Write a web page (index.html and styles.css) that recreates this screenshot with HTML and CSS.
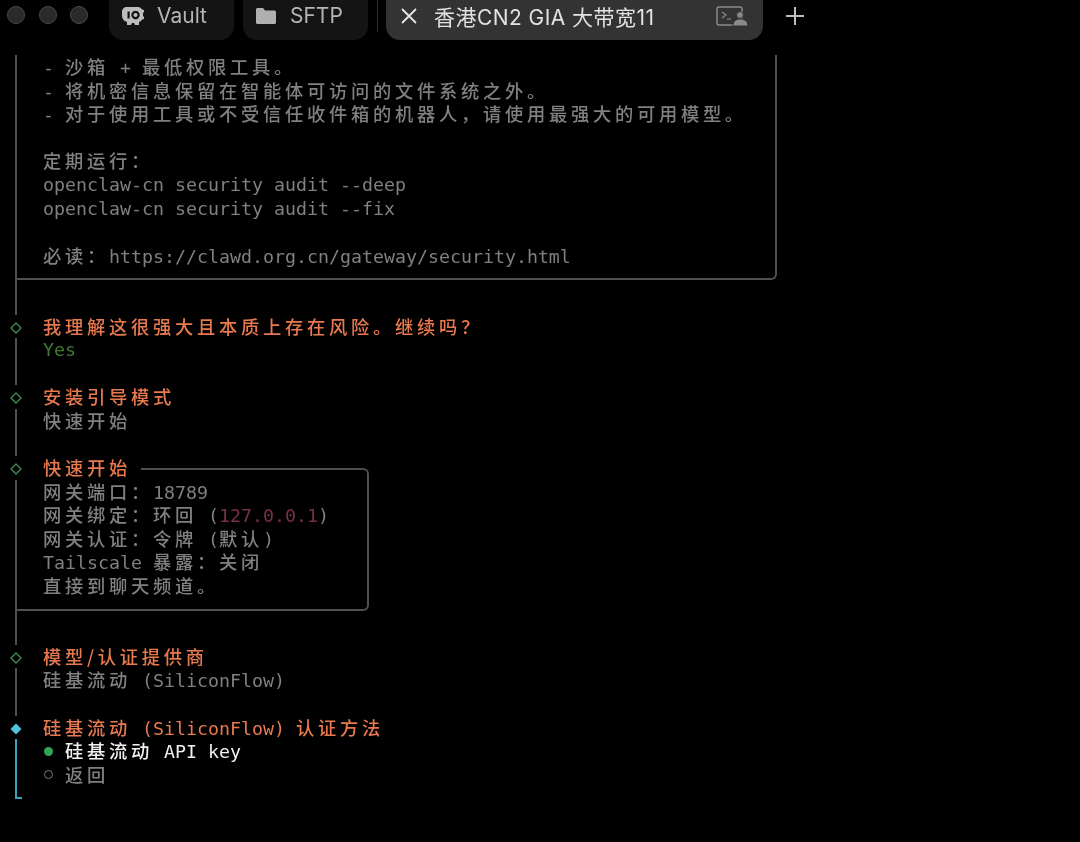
FILE: index.html
```html
<!DOCTYPE html>
<html lang="zh">
<head>
<meta charset="utf-8">
<title>Terminal</title>
<link rel="stylesheet" href="styles.css">
</head>
<body>
<div class="tabbar">
  <div class="lights"><i class="light"></i><i class="light"></i><i class="light"></i></div>
  <div class="tab tab-vault">
    <svg class="ic-vault" viewBox="0 0 24 20"><path fill="#bdbdbd" fill-rule="evenodd" d="M6 1h11c2 0 3 1 4 2.500l2 .5v2l-1 1v3l1 1v2l-2 .5c-.5 1-1.500 2-3 2.500v3h-4l-1-2h-2l-1 2H6v-3C3 15 1 13 1 9V6c0-3 2-5 5-5zM6.500 5.500v7h2.200v-7zM14.500 4.800a4.200 4.200 0 1 0 .01 0zm0 2.200a2 2 0 1 1-.01 0z"/></svg>
    <span class="tab-label">Vault</span>
  </div>
  <div class="tab tab-sftp">
    <svg class="ic-folder" viewBox="0 0 20 16"><path fill="#b0b0b0" d="M0 1.500C0 .7.7 0 1.500 0H7l2 2.500h9.500c.8 0 1.500.7 1.500 1.500v10.500c0 .8-.7 1.500-1.500 1.500h-17C.7 16 0 15.300 0 14.500z"/></svg>
    <span class="tab-label">SFTP</span>
  </div>
  <div class="divider"></div>
  <div class="tab tab-active">
    <svg class="ic-close" viewBox="0 0 16 16"><path d="M1 1l14 14M15 1L1 15" stroke="#e6e6e6" stroke-width="1.800" fill="none"/></svg>
    <span class="tab-title">香港CN2 GIA 大带宽11</span>
    <svg class="ic-term" viewBox="0 0 32 20"><rect x="1" y="1" width="25" height="18" rx="2" fill="none" stroke="#8a8a8a" stroke-width="1.500"/><path d="M6 6l4 3-4 3M11 13h4" stroke="#8a8a8a" stroke-width="1.200" fill="none"/><circle cx="24" cy="9" r="3.400" fill="#8a8a8a" stroke="#333" stroke-width="1"/><path d="M17 20c0-5 3-7 7-7s8 2 8 7z" fill="#8a8a8a" stroke="#333" stroke-width="1"/></svg>
  </div>
  <svg class="ic-plus" viewBox="0 0 18 18"><path d="M9 0v18M0 9h18" stroke="#bdbdbd" stroke-width="2"/></svg>
</div>

<main class="term">
  <div class="box box-wide">
    <div class="row"><i class="rail"></i><span>- <b class="c">沙箱</b> + <b class="c">最低权限工具。</b></span></div>
    <div class="row"><i class="rail"></i><span>- <b class="c">将机密信息保留在智能体可访问的文件系统之外。</b></span></div>
    <div class="row"><i class="rail"></i><span>- <b class="c">对于使用工具或不受信任收件箱的机器人，请使用最强大的可用模型。</b></span></div>
    <div class="row"><i class="rail"></i></div>
    <div class="row"><i class="rail"></i><span><b class="c">定期运行：</b></span></div>
    <div class="row"><i class="rail"></i><span>openclaw-cn security audit --deep</span></div>
    <div class="row"><i class="rail"></i><span>openclaw-cn security audit --fix</span></div>
    <div class="row"><i class="rail"></i></div>
    <div class="row"><i class="rail"></i><span><b class="c">必读：</b>https://clawd.org.cn/gateway/security.html</span></div>
  </div>
  <div class="row"><i class="rail"></i><i class="box-foot box-foot-wide"></i></div>
  <div class="row"><i class="rail"></i></div>

  <div class="row"><svg class="diamond" viewBox="0 0 12 12"><path d="M6 1 11 6 6 11 1 6z" fill="none" stroke="#3f8a4c" stroke-width="1.400"/></svg><span class="title"><b class="c">我理解这很强大且本质上存在风险。继续吗？</b></span></div>
  <div class="row"><i class="rail"></i><span class="yes">Yes</span></div>
  <div class="row"><i class="rail"></i></div>

  <div class="row"><svg class="diamond" viewBox="0 0 12 12"><path d="M6 1 11 6 6 11 1 6z" fill="none" stroke="#3f8a4c" stroke-width="1.400"/></svg><span class="title"><b class="c">安装引导模式</b></span></div>
  <div class="row"><i class="rail"></i><span><b class="c">快速开始</b></span></div>
  <div class="row"><i class="rail"></i></div>

  <div class="qbox">
    <div class="row"><svg class="diamond" viewBox="0 0 12 12"><path d="M6 1 11 6 6 11 1 6z" fill="none" stroke="#3f8a4c" stroke-width="1.400"/></svg><span class="title"><b class="c">快速开始</b></span><i class="box-head"></i></div>
    <div class="row row-edge"><i class="rail"></i><span><b class="c">网关端口：</b>18789</span></div>
    <div class="row row-edge"><i class="rail"></i><span><b class="c">网关绑定：环回</b> (<span class="ip">127.0.0.1</span>)</span></div>
    <div class="row row-edge"><i class="rail"></i><span><b class="c">网关认证：令牌</b> (<b class="c">默认</b>)</span></div>
    <div class="row row-edge"><i class="rail"></i><span>Tailscale <b class="c">暴露：关闭</b></span></div>
    <div class="row row-edge"><i class="rail"></i><span><b class="c">直接到聊天频道。</b></span></div>
    <div class="row"><i class="rail"></i><i class="box-foot"></i></div>
  </div>
  <div class="row"><i class="rail"></i></div>

  <div class="row"><svg class="diamond" viewBox="0 0 12 12"><path d="M6 1 11 6 6 11 1 6z" fill="none" stroke="#3f8a4c" stroke-width="1.400"/></svg><span class="title"><b class="c">模型/认证提供商</b></span></div>
  <div class="row"><i class="rail"></i><span><b class="c">硅基流动</b> (SiliconFlow)</span></div>
  <div class="row"><i class="rail"></i></div>

  <div class="row"><svg class="diamond" viewBox="0 0 12 12"><path d="M6 .5 11.500 6 6 11.500 .5 6z" fill="#4fc3e0"/></svg><span class="title"><b class="c">硅基流动</b> (SiliconFlow) <b class="c">认证方法</b></span></div>
  <div class="row"><i class="rail rail-active"></i><span class="radio"><i class="dot"></i></span><span class="selected"><b class="c">硅基流动</b> API key</span></div>
  <div class="row"><i class="rail rail-active"></i><span class="radio"><i class="ring"></i></span><span><b class="c">返回</b></span></div>
  <div class="row"><i class="rail-end"></i></div>
</main>
</body>
</html>
```
FILE: styles.css
```css
* { box-sizing: border-box; }
html, body { margin: 0; height: 100%; background: #000; overflow: hidden; }
body { width: 1080px; height: 842px; filter: blur(0.4px); }

.tabbar { display: flex; align-items: flex-start; height: 55px; font-family: Inter, "Noto Sans CJK SC", sans-serif; }
.lights { display: flex; gap: 13.500px; margin: 6px 21px 0 7px; }
.light { width: 18px; height: 18px; border-radius: 50%; background: #2a2a2a; border: 1px solid #484848; }
.tab { height: 40px; border-radius: 0 0 14px 14px; display: flex; align-items: center; padding-bottom: 9px; background: #141414; color: #b5b5b5; font-size: 21px; }
.tab-vault { width: 125px; padding-left: 12px; }
.tab-sftp { width: 125px; padding-left: 13px; margin-left: 9px; }
.tab-label { margin-left: 12px; }
.ic-vault { width: 24px; height: 20px; }
.ic-folder { width: 20px; height: 16px; margin-right: 2px; }
.divider { width: 1px; height: 32px; background: #2e2e2e; margin: 0 8px 0 9px; }
.tab-active { width: 377px; background: #333; color: #e2e2e2; padding-left: 15px; padding-right: 15px; }
.ic-close { width: 16px; height: 16px; }
.tab-title { margin-left: 17px; flex: 1; font-size: 21px; letter-spacing: 0.450px; white-space: nowrap; }
.ic-term { width: 32px; height: 20px; }
.ic-plus { width: 18px; height: 18px; margin: 7px 0 0 23px; }

.term { font-family: "DejaVu Sans Mono", "Noto Sans CJK SC", monospace; font-size: 18.270px; color: #808080; line-height: 23.6px; }
.row { display: flex; align-items: stretch; height: 23.6px; white-space: pre; }
.c { font-family: "Noto Sans CJK SC", sans-serif; font-weight: 500; letter-spacing: 3.730px; }
.rail { flex: none; width: 2px; margin: 0 26px 0 15px; background: #505050; }
.rail-active { background: #3aa6bd; }
.rail-end { width: 7px; height: 13px; margin-left: 15px; border-left: 2px solid #3aa6bd; border-bottom: 2px solid #3aa6bd; }
.diamond { flex: none; width: 12px; height: 12px; margin: 7px 21px 0 10px; }
.title { color: #e8794f; }
.yes { color: #3d7a34; }
.ip { color: #7a2f4e; }
.selected { color: #f0f0f0; }
.radio { width: 22px; display: flex; align-items: center; }
.dot { width: 9px; height: 9px; margin-left: 1px; border-radius: 50%; background: #35a355; }
.ring { width: 9px; height: 9px; margin-left: 1px; border-radius: 50%; border: 1.500px solid #7a7a7a; }

.box-wide { width: 777px; border-right: 2px solid #505050; }
.box-foot { flex: none; width: 352px; height: 13px; margin-left: -26px; border-bottom: 2px solid #505050; border-right: 2px solid #505050; border-bottom-right-radius: 6px; }
.box-foot-wide { width: 760px; }
.qbox { width: 369px; }
.row-edge { border-right: 2px solid #505050; }
.box-head { flex: 1; align-self: flex-end; height: 12px; margin-left: 10px; border-top: 2px solid #505050; border-right: 2px solid #505050; border-top-right-radius: 6px; }
```
